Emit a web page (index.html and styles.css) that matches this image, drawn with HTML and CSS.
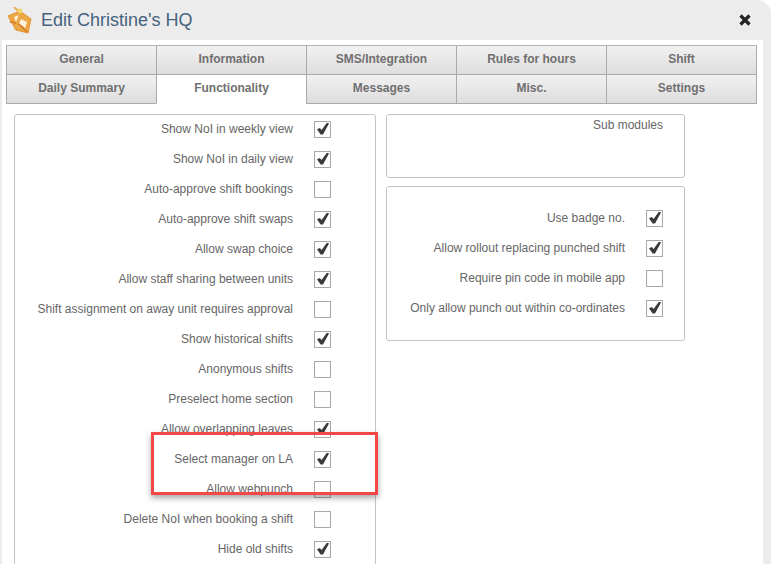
FILE: index.html
```html
<!DOCTYPE html>
<html lang="en">
<head>
<meta charset="utf-8">
<title>Edit Christine's HQ</title>
<link rel="stylesheet" href="styles.css">
</head>
<body>
<div class="dialog">
  <header class="titlebar">
    <svg class="logo" width="26" height="28" viewBox="0 0 26 28">
      <path d="M1 9 L13 4 L24 12 L21 26 L9 23 Z" fill="#eda646" stroke="#e6952f" stroke-width="1" stroke-linejoin="round"/>
      <path d="M7 10 L12 8 L9 15 Z" fill="#fdf1dc"/>
      <path d="M14 12 L20 15 L18 22 L11 19 Z" fill="#fdf1dc"/>
      <path d="M3 15 Q12 15 20 25" fill="none" stroke="#d9802a" stroke-width="2"/>
      <path d="M8 23 L14 4 M7 0 L23 15" fill="none" stroke="#e9ac4a" stroke-width="1.8"/>
      <circle cx="13" cy="4" r="2.4" fill="#f6d56c"/>
    </svg>
    <h1 class="title">Edit Christine's HQ</h1>
    <svg class="close" width="14" height="14" viewBox="0 0 14 14">
      <path d="M2.5 2.5 L11.5 11.5 M11.5 2.5 L2.5 11.5" stroke="#222" stroke-width="3.2"/>
    </svg>
  </header>
  <div class="body">
    <nav class="tabs">
      <div class="tab">General</div>
      <div class="tab">Information</div>
      <div class="tab">SMS/Integration</div>
      <div class="tab">Rules for hours</div>
      <div class="tab">Shift</div>
      <div class="tab">Daily Summary</div>
      <div class="tab active">Functionality</div>
      <div class="tab">Messages</div>
      <div class="tab">Misc.</div>
      <div class="tab">Settings</div>
    </nav>
    <div class="content">
      <section class="panel left">
        <div class="row"><span>Show NoI in weekly view</span><i class="box on"></i></div>
        <div class="row"><span>Show NoI in daily view</span><i class="box on"></i></div>
        <div class="row"><span>Auto-approve shift bookings</span><i class="box"></i></div>
        <div class="row"><span>Auto-approve shift swaps</span><i class="box on"></i></div>
        <div class="row"><span>Allow swap choice</span><i class="box on"></i></div>
        <div class="row"><span>Allow staff sharing between units</span><i class="box on"></i></div>
        <div class="row"><span>Shift assignment on away unit requires approval</span><i class="box"></i></div>
        <div class="row"><span>Show historical shifts</span><i class="box on"></i></div>
        <div class="row"><span>Anonymous shifts</span><i class="box"></i></div>
        <div class="row"><span>Preselect home section</span><i class="box"></i></div>
        <div class="row"><span>Allow overlapping leaves</span><i class="box on"></i></div>
        <div class="row"><span>Select manager on LA</span><i class="box on"></i></div>
        <div class="row"><span>Allow webpunch</span><i class="box"></i></div>
        <div class="row"><span>Delete NoI when booking a shift</span><i class="box"></i></div>
        <div class="row"><span>Hide old shifts</span><i class="box on"></i></div>
      </section>
      <div class="side">
        <section class="panel sub"><div class="sub-title">Sub modules</div></section>
        <section class="panel opts">
          <div class="row"><span>Use badge no.</span><i class="box on"></i></div>
          <div class="row"><span>Allow rollout replacing punched shift</span><i class="box on"></i></div>
          <div class="row"><span>Require pin code in mobile app</span><i class="box"></i></div>
          <div class="row"><span>Only allow punch out within co-ordinates</span><i class="box on"></i></div>
        </section>
      </div>
    </div>
  </div>
  <div class="highlight"></div>
</div>
</body>
</html>
```
FILE: styles.css
```css
* { box-sizing: border-box; }
html, body { margin: 0; height: 100%; background: #fff; overflow: hidden; }
body { font-family: "Liberation Sans", Arial, sans-serif; color: #666; }
.dialog {
  position: relative;
  width: 771px;
  height: 564px;
  background: #ececec;
  border-radius: 0 14px 0 0;
  padding: 0 8px 0 2px;
  overflow: hidden;
}
.titlebar {
  display: flex;
  align-items: center;
  height: 40px;
  margin: 0 -8px 0 -2px;
  padding: 0 19px 0 7px;
}
.logo { flex: none; margin: 2px 8px 0 0; }
.title {
  flex: 1;
  margin: 0;
  font-size: 18px;
  font-weight: 400;
  color: #466280;
}
.close { flex: none; margin-top: 0; }
.body {
  height: 524px;
  background: #fff;
  padding: 5px 0 0 4px;
}
.tabs {
  display: grid;
  grid-template-columns: repeat(5, 150px);
  grid-auto-rows: 29px;
  width: 751px;
  border-top: 1px solid #b4b4b4;
}
.tab {
  display: flex;
  align-items: center;
  justify-content: center;
  font-size: 12px;
  font-weight: 700;
  color: #707070;
  background: linear-gradient(#f1f1f1, #dedede);
  border-left: 1px solid #aaa;
  border-bottom: 1px solid #aaa;
  padding: 0 0 2px 0;
}
.tab:nth-child(5n) { border-right: 1px solid #aaa; width: 151px; }
.tab.active { background: #fff; border-bottom-color: #fff; }
.content {
  display: flex;
  align-items: flex-start;
  gap: 10px;
  margin-top: 10px;
  padding-left: 8px;
}
.panel {
  background: #fff;
  border: 1px solid #c4c4c4;
  border-radius: 3px;
}
.left {
  width: 362px;
  height: 470px;
  padding: 0 44px 0 0;
}
.side { display: flex; flex-direction: column; gap: 8px; width: 299px; }
.sub { height: 64px; padding: 3px 21px 0 0; text-align: right; }
.sub-title { font-size: 12px; line-height: 14px; }
.opts { height: 155px; padding: 16px 21px 0 0; }
.row {
  display: flex;
  align-items: center;
  justify-content: flex-end;
  gap: 21px;
  height: 30px;
  font-size: 12px;
}
.left .row:first-child { margin-top: -1px; }
.box {
  position: relative;
  display: block;
  width: 17px;
  height: 17px;
  border: 1px solid #a9a9a9;
  background: #fff;
  box-shadow: inset 0 0 1px #ddd;
}
.box.on::after {
  content: "";
  position: absolute;
  left: 2px;
  top: 1px;
  width: 12px;
  height: 12px;
  background: #3a3a3a;
  clip-path: polygon(0 56%, 24% 46%, 38% 62%, 84% 0, 100% 8%, 50% 100%, 30% 100%);
}
.highlight {
  position: absolute;
  left: 151px;
  top: 432px;
  width: 227px;
  height: 63px;
  border: 3px solid #f44848;
  box-shadow: 0 3px 6px rgba(0,0,0,.35);
}
```
